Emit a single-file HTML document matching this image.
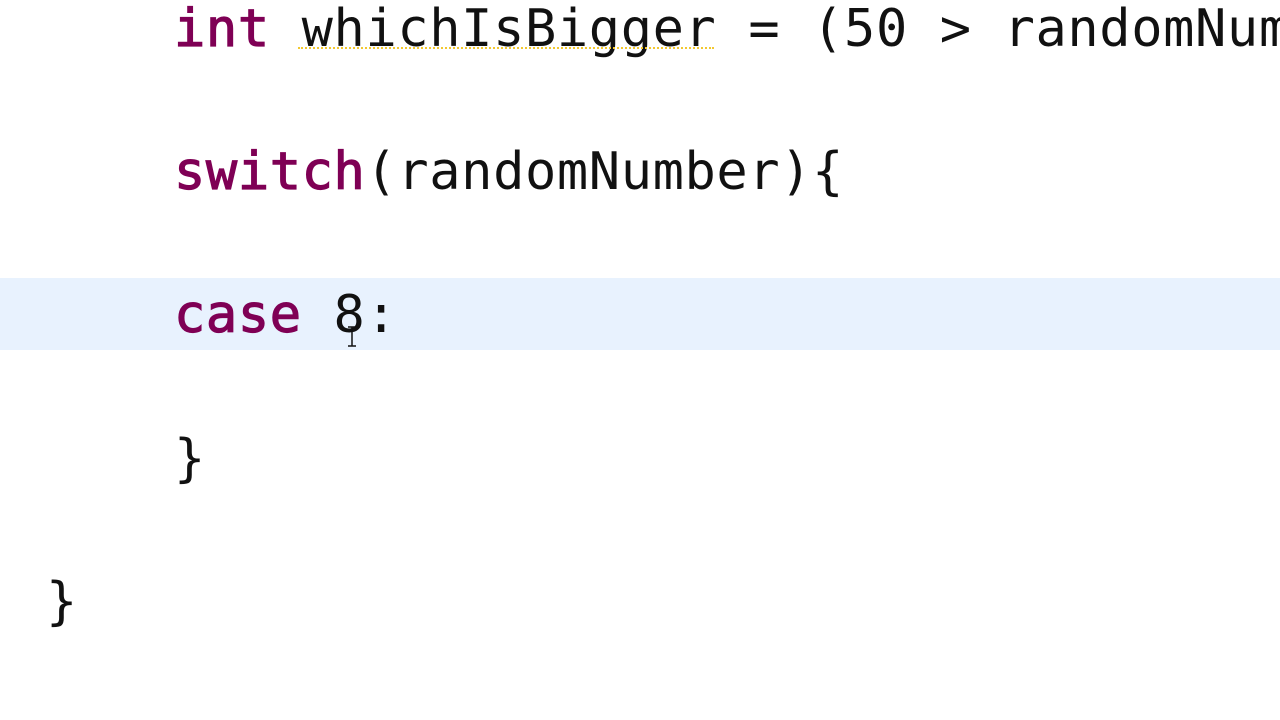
<!DOCTYPE html>
<html><head><meta charset="utf-8"><style>
html,body{margin:0;padding:0;width:1280px;height:720px;overflow:hidden;background:#fff;}
.l{position:absolute;white-space:pre;font-family:"DejaVu Sans Mono","Liberation Mono",monospace;font-size:52px;letter-spacing:0.6px;line-height:1;color:#111;}
.k{color:#7f0055;-webkit-text-stroke:1.2px #7f0055;}
.hl{position:absolute;left:0;top:278px;width:1280px;height:72px;background:#e8f2fe;}
.u{position:absolute;left:298px;top:47px;width:416px;height:0;border-top:2px dotted #f2c830;}
</style></head><body>
<div class="hl"></div>
<div style="position:absolute;left:0;top:0;width:1280px;height:720px;overflow:hidden">
<div class="l" style="left:174px;top:3px"><span class="k">int</span> whichIsBigger = (50 &gt; randomNumber</div>
<div class="u"></div>
<div class="l" style="left:174px;top:146px"><span class="k">switch</span>(randomNumber){</div>
<div class="l" style="left:174px;top:289px"><span class="k">case</span> 8:</div>
<div class="l" style="left:174px;top:433px">}</div>
<div class="l" style="left:46px;top:576px">}</div>
</div>
<svg style="position:absolute;left:346px;top:326px" width="12" height="22"><path d="M2 1h8M6 1v19M2 20h8" stroke="#111" stroke-width="1.5" fill="none"/></svg>
</body></html>
